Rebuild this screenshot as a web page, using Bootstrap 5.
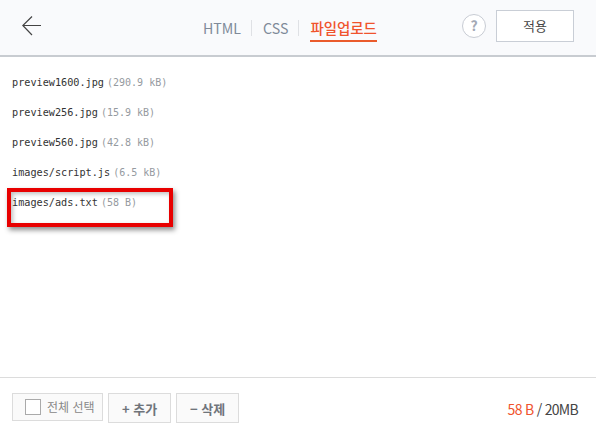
<!DOCTYPE html>
<html lang="ko">
<head>
  <meta charset="UTF-8" />
  <meta name="viewport" content="width=device-width, initial-scale=1.0" />
  <title>파일업로드</title>
  <link href="https://cdn.jsdelivr.net/npm/bootstrap@5.3.0/dist/css/bootstrap.min.css" rel="stylesheet" />
  <script src="https://cdn.jsdelivr.net/npm/bootstrap@5.3.0/dist/js/bootstrap.bundle.min.js"></script>
  <style>
    html, body { height: 100%; }
    body {
      background: #fff;
      font-family: "Noto Sans CJK KR", "Noto Sans", sans-serif;
      overflow: hidden;
    }
    .page-wrap { height: 436px; width: 596px; position: relative; }

    /* Top bar */
    .top-bar {
      height: 57px;
      background: #f9fafc;
      border-bottom: 2px solid #c8ccd1;
      padding: 10px 22px 0 22px;
    }
    .back-btn { width: 20px; height: 20px; margin-top: 6px; }
    .tab-list { position: absolute; left: 203px; top: 0; height: 55px; font-size: 14.2px; }
    .tab-item { color: #7f8a99; line-height: 20px; margin-top: 18px; }
    .tab-sep { width: 1px; height: 16px; background: #dfe1e5; margin: 20px 11px 0 10px; }
    .tab-on {
      color: #f0532d;
      font-size: 14.5px;
      font-weight: 500;
      height: 24px;
      margin-top: 18px;
      line-height: 20px;
      border-bottom: 2px solid #ea5b2c;
      letter-spacing: -0.1px;
    }
    .help-dot {
      width: 24px;
      height: 24px;
      margin-left: auto;
      margin-top: 4px;
      border: 1px solid #c8ccd4;
      border-radius: 50%;
      color: #a3a9b5;
      font-size: 14px;
      font-weight: 700;
      line-height: 21px;
      text-align: center;
      background: #fff;
    }
    .apply-btn {
      width: 78px;
      height: 32px;
      margin-left: 10px;
      background: #fff;
      border: 1px solid #c9ced6;
      border-radius: 0;
      color: #444;
      font-size: 13px;
      line-height: 28px;
      padding: 0;
    }

    /* File list */
    .file-list { padding: 16px 12px 0; margin: 0; list-style: none; }
    .file-row {
      height: 30px;
      font-family: "DejaVu Sans Mono", "Liberation Mono", monospace;
      font-size: 10.2px;
      line-height: 13px;
      padding-top: 3px;
      color: #333;
    }
    .file-size { color: #959aa0; margin-left: 3px; font-size: 10px; }

    /* Red callout lying over the list */
    .mark-box {
      position: absolute;
      left: 7px;
      top: 188px;
      width: 166px;
      height: 39px;
      border: 4px solid #e80000;
      box-shadow: 2px 3px 5px rgba(0, 0, 0, .45), inset 2px 2px 4px rgba(0, 0, 0, .25);
    }

    /* Bottom bar */
    .bottom-bar {
      position: absolute;
      left: 0;
      right: 0;
      top: 377px;
      height: 59px;
      border-top: 1px solid #dcdcdc;
      padding: 15px 18px 0 12px;
    }
    .tool-btn {
      height: 30px;
      background: #fafafa;
      border: 1px solid #dcdcdc;
      border-radius: 0;
      color: #6f747a;
      font-size: 13px;
      font-weight: 700;
      padding: 1px 0 0;
      line-height: 28px;
    }
    .check-all { width: 91px; height: 28px; line-height: 26px; padding: 0; font-size: 12px; font-weight: 400; color: #888; gap: 6px; }
    .check-box { width: 16px; height: 16px; border: 1px solid #aaa; background: #fff; margin-left: 12px; }
    .add-btn { width: 63px; margin-left: 5px; }
    .del-btn { width: 63px; margin-left: 5px; }
    .quota { margin-left: auto; margin-top: 6px; font-size: 14px; line-height: 20px; color: #444; letter-spacing: -0.7px; }
    .quota-used { color: #f0532d; }
  </style>
</head>
<body>
  <div class="page-wrap">
    <div class="top-bar d-flex align-items-start">
      <svg class="back-btn" viewBox="0 0 20 20" fill="none" stroke="#444" stroke-width="1.2">
        <path d="M19 9.500H0.800M10 0.500 0.800 9.500 10 19" />
      </svg>
      <div class="tab-list d-flex">
        <div class="tab-item">HTML</div>
        <div class="tab-sep"></div>
        <div class="tab-item">CSS</div>
        <div class="tab-sep"></div>
        <div class="tab-on">파일업로드</div>
      </div>
      <div class="help-dot">?</div>
      <button type="button" class="btn apply-btn">적용</button>
    </div>

    <ul class="file-list">
      <li class="file-row">preview1600.jpg<span class="file-size">(290.9 kB)</span></li>
      <li class="file-row">preview256.jpg<span class="file-size">(15.9 kB)</span></li>
      <li class="file-row">preview560.jpg<span class="file-size">(42.8 kB)</span></li>
      <li class="file-row">images/script.js<span class="file-size">(6.5 kB)</span></li>
      <li class="file-row">images/ads.txt<span class="file-size">(58 B)</span></li>
    </ul>
    <div class="mark-box"></div>

    <div class="bottom-bar d-flex align-items-start">
      <button type="button" class="btn tool-btn check-all d-flex align-items-center">
        <span class="check-box"></span><span>전체 선택</span>
      </button>
      <button type="button" class="btn tool-btn add-btn">+ 추가</button>
      <button type="button" class="btn tool-btn del-btn">− 삭제</button>
      <div class="quota"><span class="quota-used">58 B</span> / 20MB</div>
    </div>
  </div>
</body>
</html>
